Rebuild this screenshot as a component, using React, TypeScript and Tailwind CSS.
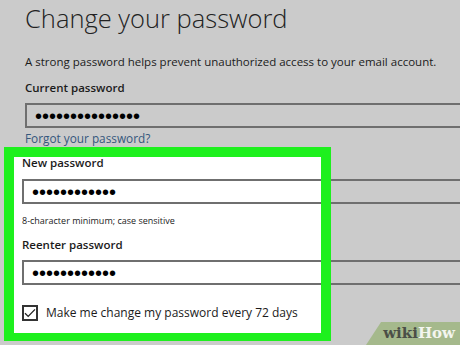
import React from 'react';

const font = { fontFamily: '"Open Sans", "Noto Sans", sans-serif' };

const Dots: React.FC<{ count: number }> = ({ count }) => (
  <span className="text-[20px] leading-none text-black" style={{ fontFamily: '"Liberation Sans", sans-serif' }}>
    {'•'.repeat(count)}
  </span>
);

const Field: React.FC<{ count: number }> = ({ count }) => (
  <div className="w-[460px] h-[25px] border-2 border-[#6f6f6f] flex items-center pl-[8px] shrink-0">
    <Dots count={count} />
  </div>
);

const App: React.FC = () => {
  return (
    <div className="w-[460px] h-[345px] bg-[#cbcbcb] overflow-hidden relative text-[#1b1b1b]" style={font}>
      {/* Top section */}
      <div className="ml-[25px] flex flex-col">
        <h1 className="mt-[3px] h-[30px] text-[25.5px] leading-[30px] font-light text-[#222] whitespace-nowrap">
          Change your password
        </h1>
        <p className="mt-[20px] text-[11.5px] leading-[18px] whitespace-nowrap">
          A strong password helps prevent unauthorized access to your email account.
        </p>
        <p className="mt-[8px] text-[11.5px] leading-[18px] font-semibold">Current password</p>
        <div className="mt-[6px]">
          <Field count={15} />
        </div>
        <a className="text-[11.8px] leading-[16px] text-[#35577d] mt-[2px]">Forgot your password?</a>
      </div>

      {/* Highlighted section */}
      <div className="relative ml-[4px] mt-px w-[327px] h-[194px] bg-white pl-[18px] pt-[7px] flex flex-col">
        <p className="text-[11.5px] leading-[18px] font-semibold">New password</p>
        <div className="mt-[7px]">
          <Field count={12} />
        </div>
        <p className="mt-[10px] text-[9px] leading-[14px]">8-character minimum; case sensitive</p>
        <p className="mt-[8px] text-[11.5px] leading-[18px] font-semibold">Reenter password</p>
        <div className="mt-[6px]">
          <Field count={12} />
        </div>
        <label className="mt-[19px] flex items-center gap-[8px] h-[18px]">
          <span className="w-[16px] h-[16px] border-2 border-[#333] flex items-center justify-center bg-white">
            <svg width="12" height="10" viewBox="0 0 12 10" fill="none">
              <path d="M1 5.2 L4.2 8.4 L11 1.4" stroke="#222" strokeWidth="1.3" />
            </svg>
          </span>
          <span className="text-[12px] leading-[18px] whitespace-nowrap">Make me change my password every 72 days</span>
        </label>
        <div className="absolute inset-0 border-[10px] border-b-[8px] border-[#1ef01e] pointer-events-none" />
      </div>

      {/* wikiHow watermark */}
      <div
        className="absolute right-0 bottom-0 w-[94px] h-[23px] bg-[#a5b98c] flex items-center justify-end pr-[5px]"
        style={{ clipPath: 'polygon(16% 0, 100% 0, 100% 100%, 0 100%)' }}
      >
        <span className="text-[15px] leading-none font-bold" style={{ fontFamily: '"DejaVu Serif", serif' }}>
          <span className="text-[#4b4f47]">wiki</span>
          <span className="text-[#f3f5ef]">How</span>
        </span>
      </div>
    </div>
  );
};

export default App;
